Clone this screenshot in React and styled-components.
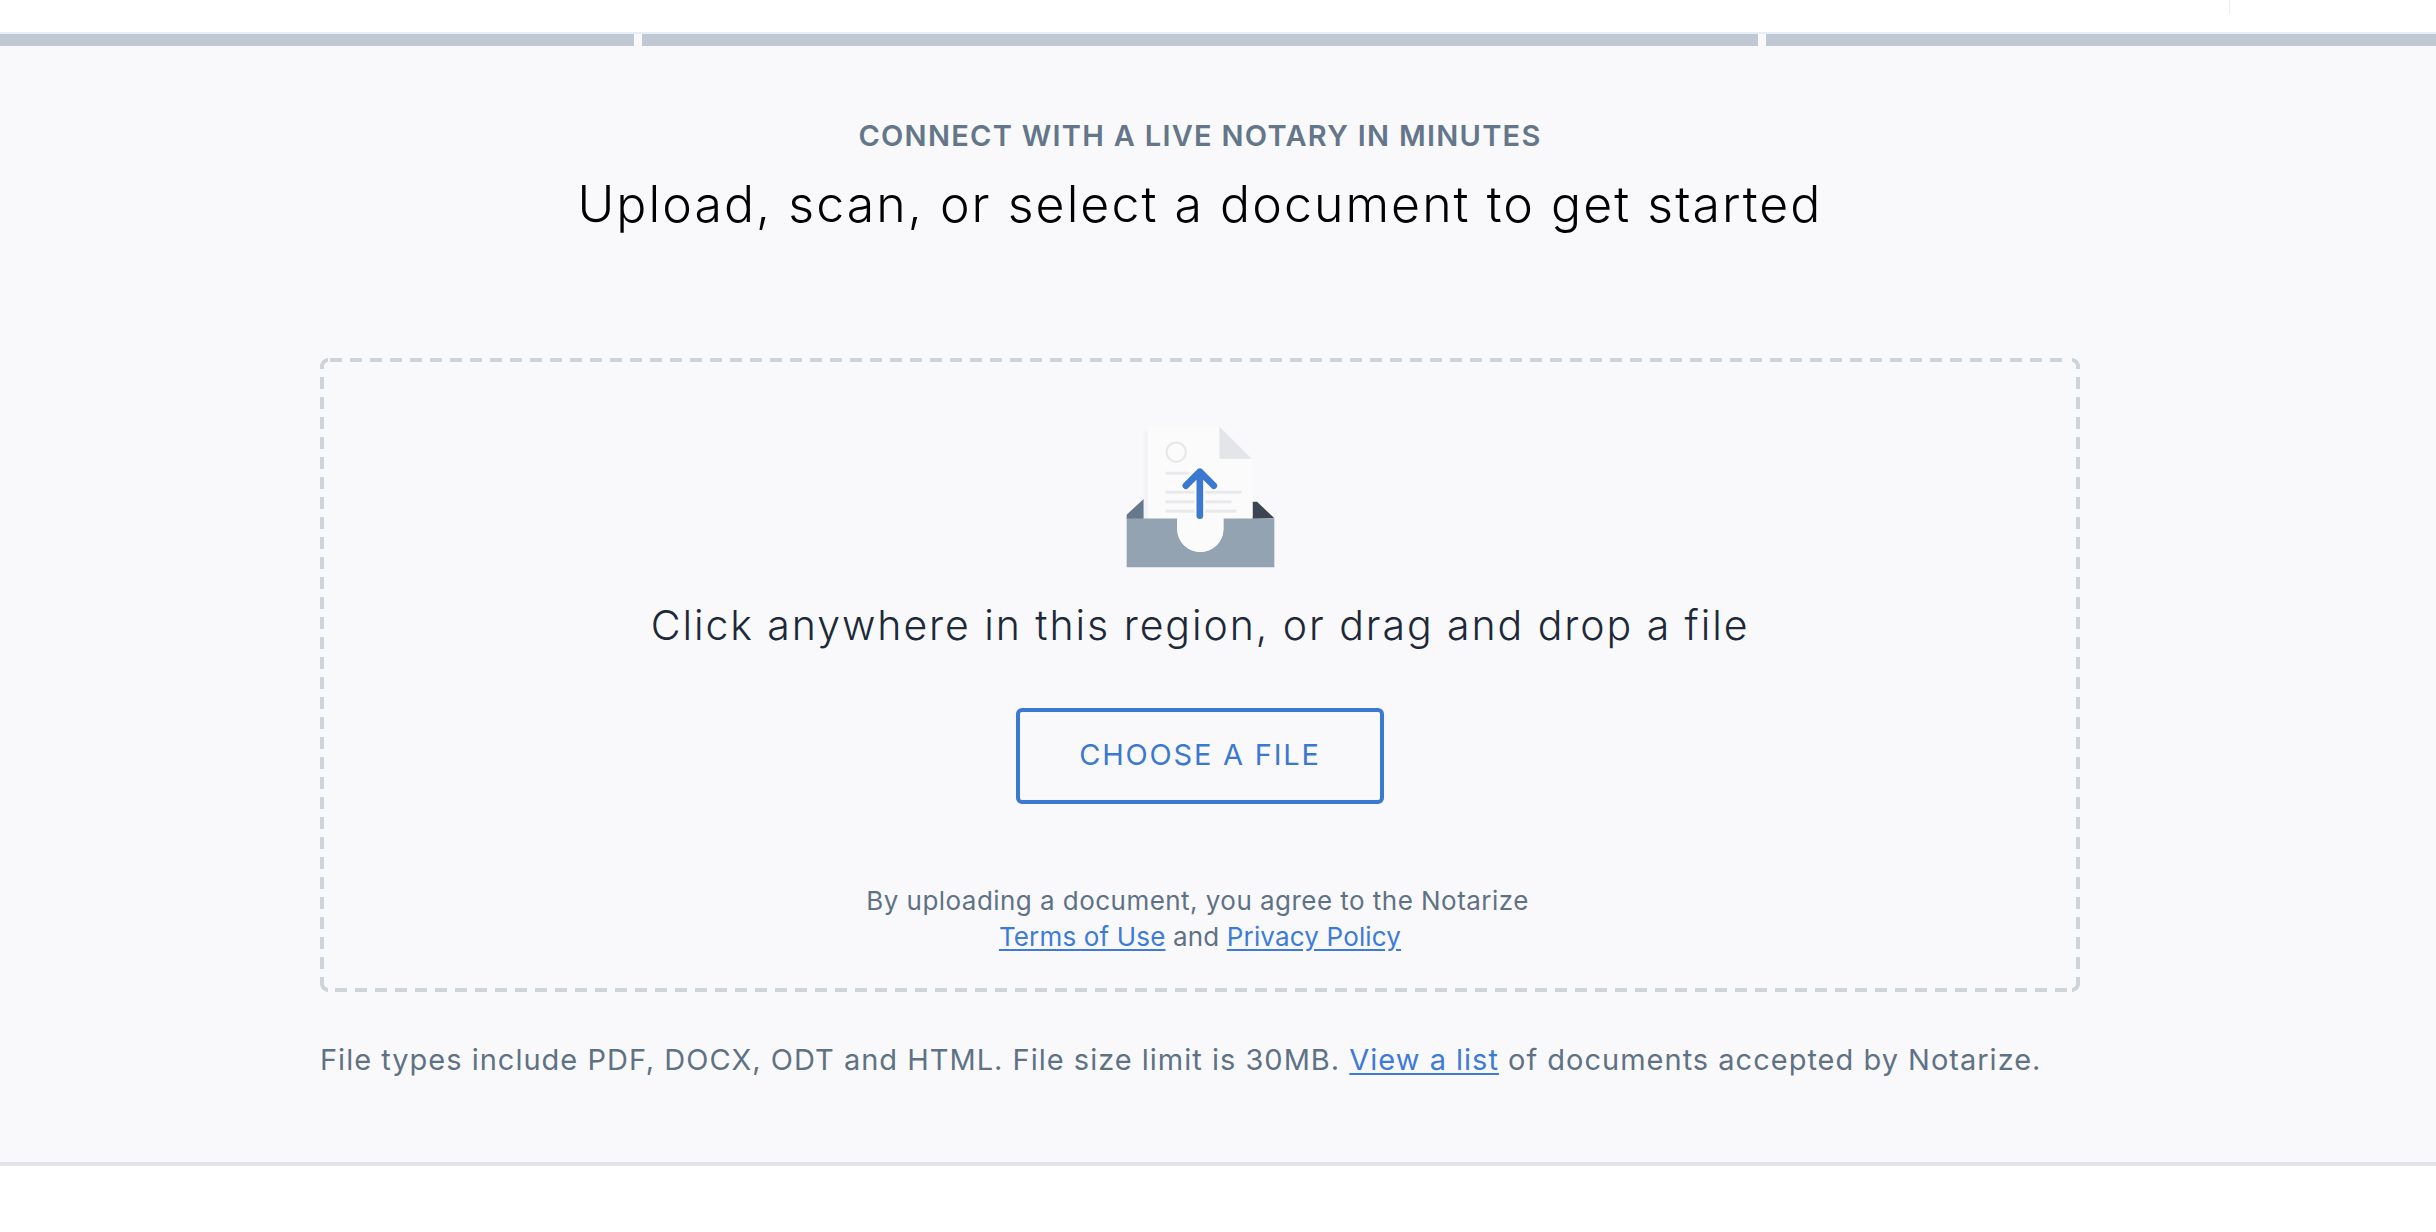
import React from "react";
import styled, { createGlobalStyle } from "styled-components";

const Global = createGlobalStyle`
  html, body { margin: 0; padding: 0; background: #fff; }
  body { font-family: Inter, "Liberation Sans", sans-serif; }
`;

const dash = "#ced4d9";
const ring = "transparent 3.6px, " + dash + " 4px, " + dash + " 7.6px, transparent 8px";

const Page = styled.div`
  width: 2436px;
  height: 1232px;
  overflow: hidden;
  background: #fff;
`;
const TopBar = styled.header`
  height: 32px;
  display: flex;
  justify-content: flex-end;
  padding-right: 206px;
  background: #fff;
`;
const Tick = styled.span`
  width: 1px;
  height: 14px;
  background: #e4eef8;
`;
const Progress = styled.div`
  display: flex;
  gap: 8px;
  height: 12px;
  border-top: 2px solid #e4eef8;
  background: #f9f9fb;
`;
const Segment = styled.div`
  flex: ${p => (p.$width ? `0 0 ${p.$width}px` : "1")};
  background: #bfc8d3;
`;
const Main = styled.main`
  height: 1120px;
  box-sizing: border-box;
  background: #f9f9fb;
  border-bottom: 4px solid #e1e3e7;
  padding: 72px 36px 0 0;
  display: flex;
  flex-direction: column;
  align-items: center;
`;
const Eyebrow = styled.div`
  font-size: 29px;
  line-height: 36px;
  font-weight: 600;
  letter-spacing: 1.28px;
  color: #647689;
`;
const Heading = styled.h1`
  margin: 18px 0 0;
  font-size: 50px;
  line-height: 64px;
  font-weight: 300;
  letter-spacing: 2.05px;
  color: #000;
`;
const Zone = styled.section`
  width: 1760px;
  height: 634px;
  box-sizing: border-box;
  margin-top: 122px;
  padding-top: 65px;
  display: flex;
  flex-direction: column;
  align-items: center;
  background-repeat: no-repeat;
  background-image:
    repeating-linear-gradient(90deg, ${dash} 0 12px, transparent 12px 20px),
    repeating-linear-gradient(90deg, ${dash} 0 12px, transparent 12px 20px),
    repeating-linear-gradient(180deg, ${dash} 0 12px, transparent 12px 20px),
    repeating-linear-gradient(180deg, ${dash} 0 12px, transparent 12px 20px),
    radial-gradient(circle at 8px 8px, ${ring}),
    radial-gradient(circle at 0 8px, ${ring}),
    radial-gradient(circle at 8px 0, ${ring}),
    radial-gradient(circle at 0 0, ${ring}),
    linear-gradient(${dash}, ${dash}),
    linear-gradient(${dash}, ${dash}),
    linear-gradient(${dash}, ${dash}),
    linear-gradient(${dash}, ${dash});
  background-position:
    10px 0,
    15px 100%,
    0 19px,
    100% 19px,
    0 0,
    100% 0,
    0 100%,
    100% 100%,
    0 8px,
    100% 8px,
    0 calc(100% - 8px),
    100% calc(100% - 8px);
  background-size:
    calc(100% - 20px) 4px,
    calc(100% - 28px) 4px,
    4px calc(100% - 41px),
    4px calc(100% - 41px),
    8px 8px,
    8px 8px,
    8px 8px,
    8px 8px,
    4px 3px,
    4px 3px,
    4px 7px,
    4px 7px;
`;
const Illustration = styled.svg`
  display: block;
  width: 153px;
  height: 147px;
`;
const Prompt = styled.p`
  margin: 27px 0 0;
  font-size: 41px;
  line-height: 56px;
  font-weight: 300;
  letter-spacing: 1.94px;
  color: #1d2939;
`;
const ChooseButton = styled.button`
  margin-top: 55px;
  width: 368px;
  height: 96px;
  box-sizing: border-box;
  padding: 0 0 3px;
  background: transparent;
  border: 4px solid #3b78cf;
  border-radius: 6px;
  font-family: inherit;
  font-size: 29px;
  font-weight: 400;
  letter-spacing: 1.8px;
  color: #3b78cf;
`;
const Legal = styled.div`
  margin-top: 79px;
  font-size: 26px;
  line-height: 36px;
  text-align: center;
  color: #5f7285;
`;
const LegalLine = styled.p`
  margin: 0;
  padding-right: ${p => p.$inset || 0}px;
  letter-spacing: ${p => p.$tracking}px;
`;
const TextLink = styled.a`
  color: #3d7bd9;
  text-decoration: underline;
  text-underline-offset: 3px;
`;
const Note = styled.p`
  width: 1760px;
  margin: 48px 0 0;
  font-size: 29px;
  line-height: 40px;
  letter-spacing: 1px;
  color: #5f7285;
`;

const UploadArt = () => (
  <Illustration viewBox="130 70 460 441">
    <path d="M138 345 L190 297 L190 358 L138 358 Z" fill="#66798c" />
    <path d="M517 306 L530 306 L582 356 L517 358 Z" fill="#3b4652" />
    <rect x="189" y="95" width="14" height="265" fill="#f3f3f6" />
    <path d="M202 80 H417 L515 177 V360 H202 Z" fill="#fbfbfc" />
    <path d="M417 80 L514 177 H417 Z" fill="#e4e5e9" />
    <circle cx="287" cy="157" r="29" fill="none" stroke="#e6e7eb" strokeWidth="6" />
    <g fill="#e8e9ed">
      <rect x="255" y="216" width="70" height="9" />
      <rect x="255" y="273" width="228" height="9" />
      <rect x="255" y="302" width="198" height="9" />
      <rect x="255" y="330" width="213" height="9" />
      <rect x="255" y="359" width="142" height="9" />
    </g>
    <path d="M138 357 H290 V388 A69 69 0 0 0 429 388 V357 H582 V503 H138 Z" fill="#94a3b1" />
    <path d="M290 357 H429 V388 A69 69 0 0 1 290 388 Z" fill="#fbfbfc" />
    <path d="M358 350 V214 M315 258 L358 214 L401 258" fill="none" stroke="#fbfbfc" strokeWidth="32" strokeLinecap="round" strokeLinejoin="round" />
    <path d="M358 348 V216 M316 258 L358 216 L400 258" fill="none" stroke="#3b78cf" strokeWidth="20" strokeLinecap="round" strokeLinejoin="round" />
  </Illustration>
);

export default function App() {
  return (
    <Page>
      <Global />
      <TopBar><Tick /></TopBar>
      <Progress>
        <Segment $width={634} />
        <Segment $width={1116} />
        <Segment />
      </Progress>
      <Main>
        <Eyebrow>CONNECT WITH A LIVE NOTARY IN MINUTES</Eyebrow>
        <Heading>Upload, scan, or select a document to get started</Heading>
        <Zone>
          <UploadArt />
          <Prompt>Click anywhere in this region, or drag and drop a file</Prompt>
          <ChooseButton>CHOOSE A FILE</ChooseButton>
          <Legal>
            <LegalLine $inset={5} $tracking={0.46}>By uploading a document, you agree to the Notarize</LegalLine>
            <LegalLine $tracking={0.16}>
              <TextLink>Terms of Use</TextLink> and <TextLink>Privacy Policy</TextLink>
            </LegalLine>
          </Legal>
        </Zone>
        <Note>
          File types include PDF, DOCX, ODT and HTML. File size limit is 30MB. <TextLink>View a list</TextLink> of documents accepted by Notarize.
        </Note>
      </Main>
    </Page>
  );
}
